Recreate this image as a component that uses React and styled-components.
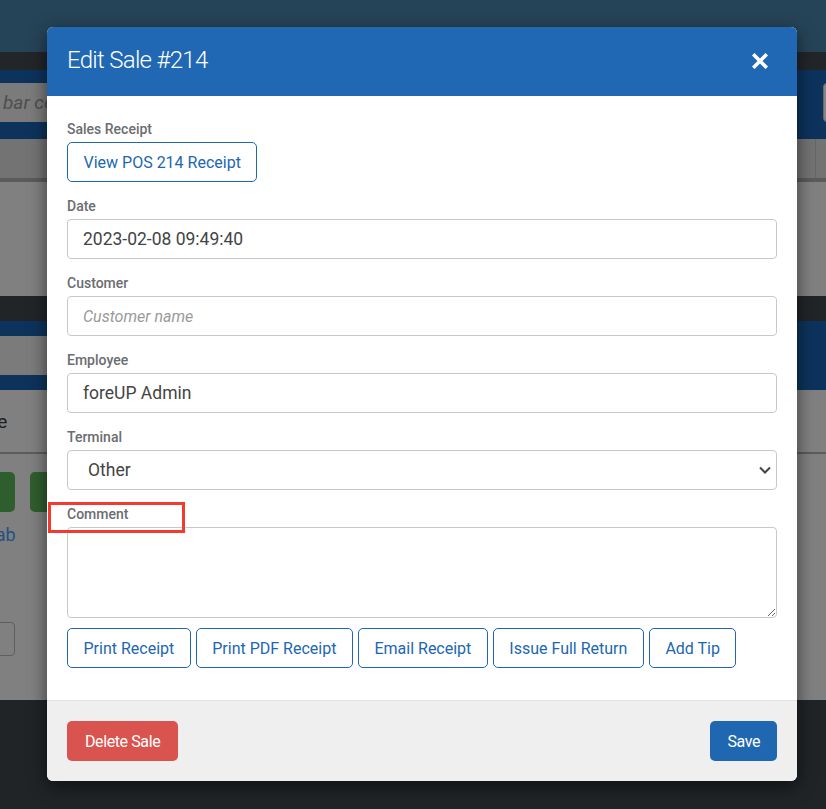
import React from "react";
import styled, { createGlobalStyle } from "styled-components";

const GlobalStyle = createGlobalStyle`
  html, body {
    margin: 0;
    padding: 0;
    overflow: hidden;
  }
  * {
    box-sizing: border-box;
  }
`;

const Page = styled.div`
  position: relative;
  width: 826px;
  height: 809px;
  overflow: hidden;
  display: flex;
  flex-direction: column;
  background: #808080;
  font-family: Roboto, "Liberation Sans", sans-serif;
`;

const Band = styled.div`
  flex: none;
  height: ${(p) => p.h}px;
  background: ${(p) => p.bg};
`;

const SearchBand = styled.div`
  flex: none;
  display: flex;
  gap: 28px;
  padding: ${(p) => p.pad};
  background: #0d335c;
`;

const SearchInput = styled.div`
  flex: 1;
  height: ${(p) => p.h}px;
  padding-left: 3px;
  display: flex;
  align-items: center;
  background: #7b7b7b;
  border-radius: 0 4px 4px 0;
  color: #4e4e4e;
  font-style: italic;
  font-size: 19px;
`;

const SideButton = styled.div`
  width: 12px;
  margin-right: -9px;
  background: #858585;
  border: 1px solid #6a6a6a;
  border-radius: 4px;
`;

const TableHead = styled.div`
  flex: none;
  display: flex;
  height: 39px;
  background: #737373;
  border-bottom: 4px solid #5b5b5b;
  box-sizing: content-box;
`;

const HeadCell = styled.div`
  width: ${(p) => p.w}px;
  border-right: 1px solid #666;
`;

const Content = styled.div`
  flex: none;
  height: 310px;
  display: flex;
  flex-direction: column;
`;

const BackTitle = styled.div`
  height: 62px;
  margin-left: -29px;
  display: flex;
  align-items: center;
  color: #1e1e1e;
  font-size: 19px;
  border-bottom: 2px solid #5c5c5c;
  box-sizing: content-box;
`;

const GreenRow = styled.div`
  display: flex;
  gap: 15px;
  margin: 18px 0 0 -60px;
`;

const GreenButton = styled.div`
  width: 75px;
  height: 40px;
  background: #2f5e2e;
  border-radius: 5px;
`;

const BackLink = styled.div`
  margin: 12px 0 0 -14px;
  color: #24507f;
  font-size: 18px;
`;

const BackInput = styled.div`
  width: 60px;
  height: 34px;
  margin: 77px 0 0 -45px;
  border: 1px solid #5f5f5f;
  border-radius: 4px;
`;

/* modal */

const Modal = styled.div`
  position: absolute;
  left: 47px;
  top: 27px;
  width: 750px;
  background: #fff;
  border-radius: 6px;
  box-shadow: 0 5px 18px rgba(0, 0, 0, 0.55);
`;

const ModalHeader = styled.div`
  height: 69px;
  padding: 0 20px;
  display: flex;
  align-items: center;
  justify-content: space-between;
  background: #2068b3;
  border-radius: 6px 6px 0 0;
`;

const ModalTitle = styled.div`
  margin-top: -4px;
  color: #fff;
  font-size: 24px;
  font-weight: 300;
  letter-spacing: -0.7px;
`;

const CloseButton = styled.button`
  width: 24px;
  height: 24px;
  margin-right: 5px;
  margin-top: -2px;
  padding: 0;
  border: none;
  background: none;
  display: flex;
  align-items: center;
  justify-content: center;
  cursor: pointer;
`;

const ModalBody = styled.div`
  position: relative;
  padding: 25px 20px 32px;
`;

const Group = styled.div`
  margin-bottom: ${(p) => (p.last ? 0 : 16)}px;
`;

const Label = styled.div`
  height: 17px;
  margin-bottom: 4px;
  color: #6a6d71;
  font-size: 14px;
  font-weight: 500;
  line-height: 17px;
`;

const Input = styled.input`
  width: 100%;
  height: 40px;
  padding: 0 15px;
  border: 1px solid #c8c8c8;
  border-radius: 4px;
  color: #444;
  font-family: inherit;
  font-size: 17.5px;
  outline: none;
  &::placeholder {
    color: #9a9a9a;
    font-style: italic;
    font-size: 16px;
  }
`;

const SelectWrap = styled.div`
  position: relative;
`;

const Select = styled.select`
  width: 100%;
  height: 40px;
  padding: 0 15px 0 20px;
  border: 1px solid #c8c8c8;
  border-radius: 4px;
  background: #fff;
  color: #444;
  font-family: inherit;
  font-size: 17.5px;
  appearance: none;
  outline: none;
`;

const Chevron = styled.svg`
  position: absolute;
  right: 5px;
  top: 14px;
  pointer-events: none;
`;

const TextArea = styled.textarea`
  display: block;
  width: 100%;
  height: 91px;
  border: 1px solid #c8c8c8;
  border-radius: 4px;
  font-family: inherit;
  outline: none;
`;

const OutlineButton = styled.button`
  height: 40px;
  padding: 0 15.5px;
  border: 1px solid #2067b2;
  border-radius: 5px;
  background: #fff;
  color: #2067b2;
  font-family: inherit;
  font-size: 16px;
  cursor: pointer;
`;

const ActionRow = styled.div`
  display: flex;
  gap: 5px;
  margin-top: 10px;
`;

const Highlight = styled.div`
  position: absolute;
  left: 1px;
  top: 406px;
  width: 137px;
  height: 31px;
  border: 3px solid #f33a2e;
  pointer-events: none;
`;

const ModalFooter = styled.div`
  height: 81px;
  padding: 0 20px;
  display: flex;
  align-items: center;
  justify-content: space-between;
  background: #efefef;
  border-top: 1px solid #e3e3e3;
  border-radius: 0 0 6px 6px;
`;

const SolidButton = styled.button`
  height: 40px;
  padding: 0 ${(p) => p.pad}px;
  border: none;
  border-radius: 5px;
  background: ${(p) => p.bg};
  color: #fff;
  font-family: inherit;
  font-size: 16px;
  letter-spacing: -0.4px;
  cursor: pointer;
`;

const fields = [
  { label: "Date", value: "2023-02-08 09:49:40" },
  { label: "Customer", placeholder: "Customer name" },
  { label: "Employee", value: "foreUP Admin" },
];

const actions = [
  "Print Receipt",
  "Print PDF Receipt",
  "Email Receipt",
  "Issue Full Return",
  "Add Tip",
];

const App = () => {
  return (
    <Page>
      <GlobalStyle />
      <Band h={52} bg="#264457" />
      <Band h={18} bg="#222628" />
      <SearchBand pad="13px 0 17px">
        <SearchInput h={39}>bar code</SearchInput>
        <SideButton />
      </SearchBand>
      <TableHead>
        <HeadCell w={816} />
      </TableHead>
      <Band h={114} bg="#808080" />
      <Band h={25} bg="#212528" />
      <SearchBand pad="15px 32px 15px 0">
        <SearchInput h={39} />
      </SearchBand>
      <Content>
        <BackTitle>Sale</BackTitle>
        <GreenRow>
          <GreenButton />
          <GreenButton />
        </GreenRow>
        <BackLink>Tab</BackLink>
        <BackInput />
      </Content>
      <Band h={109} bg="#202427" />

      <Modal>
        <ModalHeader>
          <ModalTitle>Edit Sale #214</ModalTitle>
          <CloseButton aria-label="Close">
            <svg width="16" height="16" viewBox="0 0 16 16">
              <path
                d="M2.5 2.5L13.5 13.5M13.5 2.5L2.5 13.5"
                stroke="#fff"
                strokeWidth="3.6"
                strokeLinecap="square"
              />
            </svg>
          </CloseButton>
        </ModalHeader>
        <ModalBody>
          <Group>
            <Label>Sales Receipt</Label>
            <OutlineButton>View POS 214 Receipt</OutlineButton>
          </Group>
          {fields.map((f) => (
            <Group key={f.label}>
              <Label>{f.label}</Label>
              <Input
                defaultValue={f.value}
                placeholder={f.placeholder}
                readOnly={!f.placeholder}
              />
            </Group>
          ))}
          <Group>
            <Label>Terminal</Label>
            <SelectWrap>
              <Select defaultValue="other">
                <option value="other">Other</option>
              </Select>
              <Chevron width="14" height="12" viewBox="0 0 14 12">
                <path
                  d="M2 3.5L7 8.5L12 3.5"
                  fill="none"
                  stroke="#444"
                  strokeWidth="2"
                />
              </Chevron>
            </SelectWrap>
          </Group>
          <Group last>
            <Label>Comment</Label>
            <TextArea />
          </Group>
          <ActionRow>
            {actions.map((a) => (
              <OutlineButton key={a}>{a}</OutlineButton>
            ))}
          </ActionRow>
          <Highlight />
        </ModalBody>
        <ModalFooter>
          <SolidButton bg="#d9534f" pad={18}>
            Delete Sale
          </SolidButton>
          <SolidButton bg="#2067b2" pad={17}>
            Save
          </SolidButton>
        </ModalFooter>
      </Modal>
    </Page>
  );
};

export default App;
